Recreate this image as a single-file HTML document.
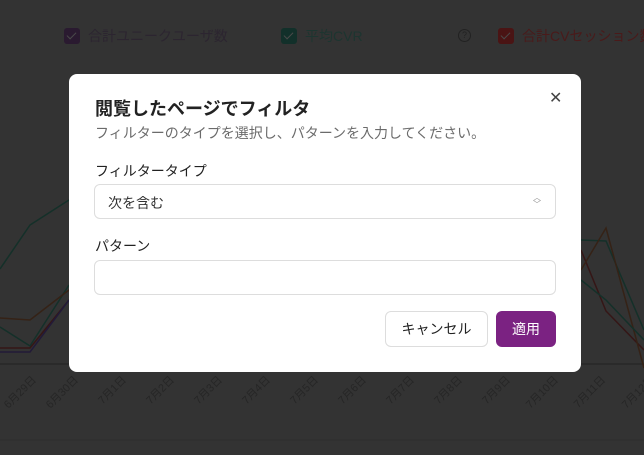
<!DOCTYPE html>
<html><head><meta charset="utf-8"><style>
*{box-sizing:border-box;margin:0;padding:0}
body{width:644px;height:455px;overflow:hidden;background:#333;font-family:"Liberation Sans","Noto Sans CJK JP",sans-serif;position:relative}
.lg{position:absolute;top:26px;font-size:14px;color:#2a2a2a;display:flex;align-items:center;gap:8px;white-space:nowrap}
.cb{width:16px;height:16px;border-radius:3px;display:inline-block;position:relative;flex:none}
.cb:after{content:"";position:absolute;left:5px;top:2px;width:4px;height:8px;border:solid #4a4a4a;border-width:0 1.5px 1.5px 0;transform:rotate(45deg)}
.modal{position:absolute;left:69px;top:74px;width:512px;height:298px;background:#fff;border-radius:8px}
.t{position:absolute;left:26px;top:21px;font-size:18px;font-weight:bold;color:#222}
.s{position:absolute;left:26px;top:49px;font-size:14px;color:#6b6b6b}
.l{position:absolute;left:26px;font-size:14px;color:#222}
.f{position:absolute;left:25px;width:462px;height:35px;border:1px solid #ddd;border-radius:6px;font-size:14px;color:#333;padding:8px 13px}
.b{position:absolute;top:237px;height:36px;border-radius:6px;font-size:14px;display:flex;align-items:center;justify-content:center}
.x{position:absolute;left:480px;top:14px;font-size:16px;color:#444}
.ax{position:absolute;font-size:11px;color:#262626;transform:rotate(-45deg);transform-origin:right top;white-space:nowrap}
</style></head><body>
<div class="lg" style="left:64px;color:#2c2530"><span class="cb" style="background:#2a1a30"></span>合計ユニークユーザ数</div>
<div class="lg" style="left:281px;color:#1d3530"><span class="cb" style="background:#12302a"></span>平均CVR</div>
<div style="position:absolute;left:458px;top:29px;width:13px;height:13px;border:1px solid #222;border-radius:50%;font-size:9px;text-align:center;line-height:11px;color:#222">?</div>
<div class="lg" style="left:498px;color:#4a1a1a"><span class="cb" style="background:#4a1414"></span>合計CVセッション数</div>
<svg width="644" height="455" style="position:absolute;left:0;top:0">
<line x1="0" y1="364" x2="644" y2="364" stroke="#222" stroke-width="1"/>
<line x1="0" y1="440" x2="644" y2="440" stroke="#2e2e2e"/>
<polyline points="0,327 30,346 69,285" fill="none" stroke="#143029" stroke-width="1.5"/>
<polyline points="0,269 30,225 69,200" fill="none" stroke="#143029" stroke-width="1.5"/>
<polyline points="0,348 30,348 69,300" fill="none" stroke="#351616" stroke-width="1.5"/>
<polyline points="0,352 30,352 69,300" fill="none" stroke="#221a38" stroke-width="1.5"/>
<polyline points="0,318 30,320 69,290" fill="none" stroke="#352216" stroke-width="1.5"/>
<polyline points="581,240 606,241 644,330" fill="none" stroke="#143029" stroke-width="1.5"/>
<polyline points="581,250 606,311 644,350" fill="none" stroke="#351616" stroke-width="1.5"/>
<polyline points="581,270 606,228 644,368" fill="none" stroke="#352216" stroke-width="1.5"/>
<polyline points="581,280 606,300 644,340" fill="none" stroke="#143029" stroke-width="1.5"/>
</svg>
<div class="ax" style="left:-12px;top:372px">6月29日</div>
<div class="ax" style="left:30px;top:372px">6月30日</div>
<div class="ax" style="left:84px;top:372px">7月1日</div>
<div class="ax" style="left:132px;top:372px">7月2日</div>
<div class="ax" style="left:180px;top:372px">7月3日</div>
<div class="ax" style="left:228px;top:372px">7月4日</div>
<div class="ax" style="left:276px;top:372px">7月5日</div>
<div class="ax" style="left:324px;top:372px">7月6日</div>
<div class="ax" style="left:372px;top:372px">7月7日</div>
<div class="ax" style="left:420px;top:372px">7月8日</div>
<div class="ax" style="left:468px;top:372px">7月9日</div>
<div class="ax" style="left:510px;top:372px">7月10日</div>
<div class="ax" style="left:558px;top:372px">7月11日</div>
<div class="ax" style="left:606px;top:372px">7月12日</div>
<div class="modal">
<div class="t">閲覧したページでフィルタ</div>
<div class="x">✕</div>
<div class="s">フィルターのタイプを選択し、パターンを入力してください。</div>
<div class="l" style="top:87px">フィルタータイプ</div>
<div class="f" style="top:110px">次を含む<span style="position:absolute;right:14px;top:9px;font-size:8px;color:#999;line-height:7px">︿<br>﹀</span></div>
<div class="l" style="top:162px">パターン</div>
<div class="f" style="top:186px"></div>
<div class="b" style="left:316px;width:103px;border:1px solid #ddd;color:#222">キャンセル</div>
<div class="b" style="left:427px;width:60px;background:#7b2282;color:#fff">適用</div>
</div>
</body></html>
